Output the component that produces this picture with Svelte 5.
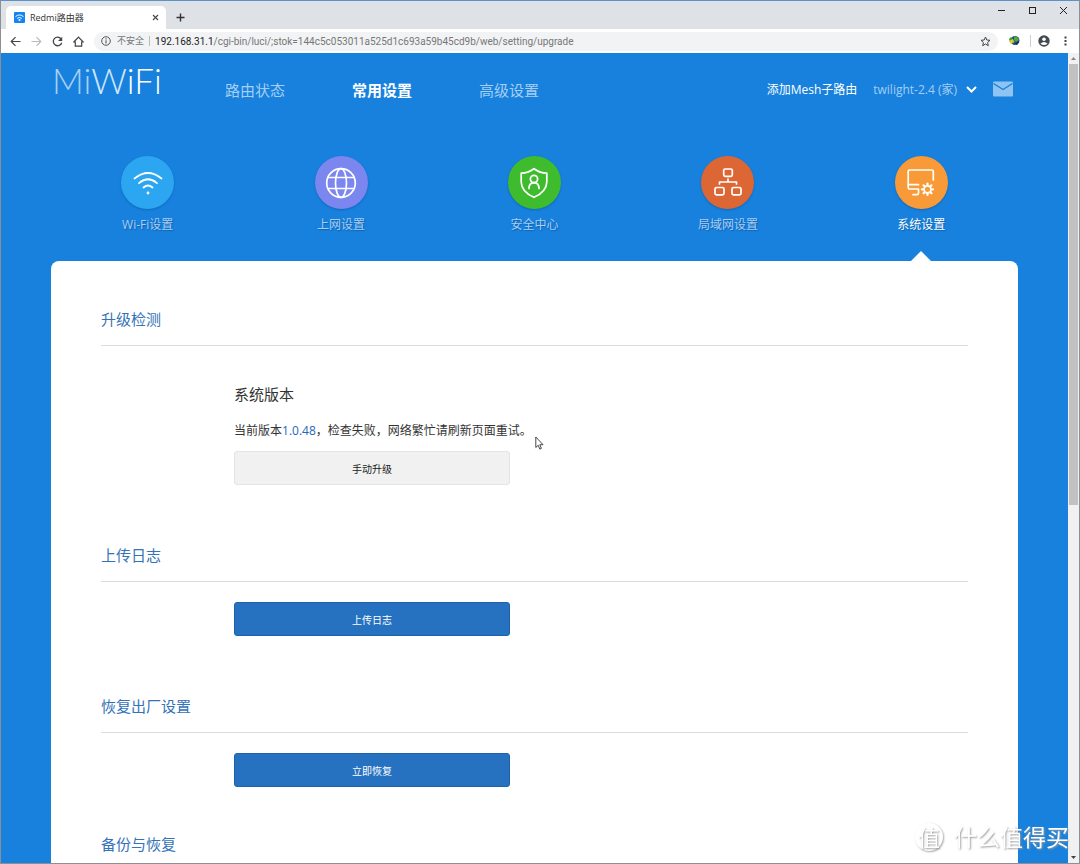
<script>
  const address = '/cgi-bin/luci/;stok=144c5c053011a525d1c693a59b45cd9b/web/setting/upgrade';
  const nav = ['路由状态', '常用设置', '高级设置'];
  const items = [
    { id: 'wifi', label: 'Wi-Fi设置' },
    { id: 'globe', label: '上网设置' },
    { id: 'shield', label: '安全中心' },
    { id: 'lan', label: '局域网设置' },
    { id: 'system', label: '系统设置' }
  ];
  const teeth = [0, 45, 90, 135, 180, 225, 270, 315];
  let activeNav = $state(1);
  let activeItem = $state('system');
</script>

<div class="window">
  <div class="tabs">
    <div class="tab">
      <svg class="fav" viewBox="0 0 11 11"><rect width="11" height="11" rx="1" fill="#1585f5"/><path d="M1.5 4.6Q5.500 1.300 9.500 4.600M3.200 6.400Q5.500 4.600 7.800 6.400" fill="none" stroke="#fff"/><circle cx="5.500" cy="8" r="1" fill="#fff"/></svg>
      <span class="tab-name">Redmi路由器</span>
      <button class="plain close" aria-label="关闭标签页"><svg width="7" height="7" viewBox="0 0 7 7"><path d="M1 1l5 5M6 1L1 6" stroke="#444" stroke-width="1.100"/></svg></button>
    </div>
    <button class="plain add" aria-label="新标签页"><svg width="9" height="9" viewBox="0 0 9 9"><path d="M4.500 .5v8M.5 4.500h8" stroke="#333" stroke-width="1.400"/></svg></button>
    <div class="win-buttons">
      <button class="plain" aria-label="最小化"><svg width="9" height="9" viewBox="0 0 9 9"><path d="M1 4.500h7" stroke="#222"/></svg></button>
      <button class="plain" aria-label="最大化"><svg width="9" height="9" viewBox="0 0 9 9"><rect x="1.500" y="1.500" width="6" height="6" fill="none" stroke="#222"/></svg></button>
      <button class="plain" aria-label="关闭"><svg width="9" height="9" viewBox="0 0 9 9"><path d="M1 1l7 7M8 1L1 8" stroke="#222"/></svg></button>
    </div>
  </div>

  <div class="toolbar">
    <button class="plain" aria-label="后退"><svg width="11" height="11" viewBox="0 0 11 11"><path d="M10.500 5.500H1.500M5.500 1.200L1.200 5.500l4.300 4.300" fill="none" stroke="#444" stroke-width="1.200"/></svg></button>
    <button class="plain" aria-label="前进"><svg width="11" height="11" viewBox="0 0 11 11"><path d="M.5 5.500h9M5.500 1.200l4.300 4.300-4.300 4.300" fill="none" stroke="#bbb" stroke-width="1.200"/></svg></button>
    <button class="plain" aria-label="刷新"><svg width="11" height="11" viewBox="0 0 11 11"><path d="M9 2.800A4.300 4.300 0 1 0 9.700 6.700" fill="none" stroke="#444" stroke-width="1.300"/><path d="M10.200 .8v4.200H6z" fill="#444"/></svg></button>
    <button class="plain" aria-label="主页"><svg width="11" height="11" viewBox="0 0 11 11"><path d="M.8 6L5.500 1.200 10.200 6H8.700v4.200H2.300V6z" fill="none" stroke="#444" stroke-width="1.200"/></svg></button>
    <div class="omnibox">
      <svg width="10" height="10" viewBox="0 0 10 10"><circle cx="5" cy="5" r="4.300" fill="none" stroke="#555"/><path d="M5 4.300v3.200M5 2.300v1.200" stroke="#555" stroke-width="1.100"/></svg>
      <span class="insecure">不安全</span>
      <span class="url"><b>192.168.31.1</b>{address}</span>
      <button class="plain star" aria-label="收藏"><svg width="11" height="11" viewBox="0 0 11 11"><path d="M5.500 1l1.300 3 3.200.3-2.400 2.200.7 3.200-2.800-1.700-2.800 1.700.7-3.200L1 4.300 4.200 4z" fill="none" stroke="#444"/></svg></button>
    </div>
    <button class="plain ext" aria-label="扩展程序"><svg width="12" height="12" viewBox="0 0 12 12"><circle cx="7" cy="5.500" r="4.500" fill="#1d4f93"/><path d="M6 1.500Q10 1 11 5L8 7 6 5z" fill="#58a33a"/><path d="M3 2l4 5-2 1-3-1-1-3z" fill="#35a526"/><path d="M1 6l4-2 1 3-3 2z" fill="#e8c63a"/><path d="M7 9l3-3 1 1-2 3z" fill="#183247"/></svg></button>
    <button class="plain account" aria-label="用户"><svg width="12" height="12" viewBox="0 0 12 12"><circle cx="6" cy="6" r="5.700" fill="#444a50"/><circle cx="6" cy="4.200" r="1.800" fill="#fff"/><path d="M2.400 8.700Q6 5.500 9.600 8.700 6 11.500 2.400 8.700" fill="#fff"/></svg></button>
    <button class="plain more" aria-label="菜单"><svg width="3" height="10" viewBox="0 0 3 10"><path d="M.5 .5h2v2h-2zM.5 4h2v2h-2zM.5 7.500h2v2h-2z" fill="#444"/></svg></button>
  </div>

  <div class="viewport">
    <div class="page">
      <header>
        <a class="logo" href="#home" aria-label="MiWiFi"><span class="dim">Mi</span><span class="mid">W</span>iFi</a>
        <nav class="main-nav">
          {#each nav as name, i}
            <a href="#nav" class:active={activeNav === i} onclick={() => (activeNav = i)}>{name}</a>
          {/each}
        </nav>
        <div class="account-bar">
          <a class="mesh" href="#mesh">添加Mesh子路由</a>
          <button class="plain router">twilight-2.4 (家)<svg width="11" height="7" viewBox="0 0 11 7"><path d="M1 1l4.500 4.500L10 1" fill="none" stroke="#fff" stroke-width="2"/></svg></button>
          <a class="mail" href="#mail" aria-label="消息"><svg width="20" height="16" viewBox="0 0 20 16"><rect y=".5" width="20" height="15" rx="1" fill="#8fc3f1"/><path d="M.5 2.500L10 8.500l9.500-6" fill="none" stroke="#1781dd" stroke-width="1.400"/></svg></a>
        </div>
      </header>

      <nav class="features">
        {#each items as item}
          <a href="#settings" class:active={activeItem === item.id} onclick={() => (activeItem = item.id)}>
            <span class="disc {item.id}">
              <svg width="32" height="32" viewBox="0 0 32 32" fill="none" stroke="#fff" stroke-width="1.700" stroke-linecap="round" stroke-linejoin="round">
                {#if item.id === 'wifi'}
                  <path d="M2.500 11.500Q16 .5 29.500 11.500M7 16.200Q16 8.300 25 16.200M11.500 20.500Q16 16.500 20.500 20.500"/><circle cx="16" cy="26" r="1.400" fill="#fff" stroke="none"/>
                {:else if item.id === 'globe'}
                  <circle cx="16" cy="16" r="14.300"/><ellipse cx="16" cy="16" rx="5.500" ry="14.300"/><path d="M3.500 10.500h25M3.500 21.500h25"/>
                {:else if item.id === 'shield'}
                  <path d="M16 1.700Q10 6 3.200 6.200V15Q3.500 25 16 30.300 28.500 25 28.800 15V6.200Q22 6 16 1.700z"/><circle cx="16" cy="12" r="3.600"/><path d="M11 21.500Q11 15.800 16 15.600 21 15.800 21 21.500"/>
                {:else if item.id === 'lan'}
                  <rect x="11.700" y="2" width="8.600" height="7.300" rx="1.500"/><rect x="3" y="20.500" width="9" height="7.300" rx="1.500"/><rect x="20" y="20.500" width="9" height="7.300" rx="1.500"/><path d="M16 12v3M7.500 17v-2h17v2"/>
                {:else}
                  <path d="M28.300 13V4.500Q28.300 3 26.800 3H4.700Q3.200 3 3.200 4.500V16Q3.200 17.700 4.700 17.700H13.500M3.200 16V20.500Q3.200 22 4.700 22H13.500V26Q13.500 27.700 12 27.700H8"/><circle cx="22.500" cy="22.300" r="3.500"/>
                  {#each teeth as angle}
                    <path d="M22.500 18v-1.300" transform="rotate({angle} 22.500 22.300)" stroke-width="2.200"/>
                  {/each}
                {/if}
              </svg>
            </span>
            <span class="label">{item.label}</span>
          </a>
        {/each}
      </nav>

      <main>
        <section>
          <h2>升级检测</h2>
          <div class="body version">
            <h3>系统版本</h3>
            <p>当前版本<span class="number">1.0.48</span>，检查失败，网络繁忙请刷新页面重试。</p>
            <button class="action light">手动升级</button>
          </div>
        </section>
        <section>
          <h2>上传日志</h2>
          <div class="body"><button class="action">上传日志</button></div>
        </section>
        <section class="reset">
          <h2>恢复出厂设置</h2>
          <div class="body"><button class="action">立即恢复</button></div>
        </section>
        <section>
          <h2>备份与恢复</h2>
        </section>
      </main>
    </div>
    <div class="scrollbar" aria-hidden="true">
      <svg width="11" height="11" viewBox="0 0 11 11"><path d="M3 7l2.500-3L8 7z" fill="#888"/></svg>
      <div class="track"><div class="thumb"></div></div>
      <svg width="11" height="11" viewBox="0 0 11 11"><path d="M3 4l2.500 3L8 4z" fill="#444"/></svg>
    </div>
  </div>

  <svg class="cursor" width="9" height="14" viewBox="0 0 9 14"><path d="M.8 1v10.500l2.400-2.200 1.600 3.800 1.600-.7-1.600-3.700h3.200z" fill="#fff" stroke="#333" stroke-width=".9"/></svg>
  <div class="watermark"><span class="seal">值</span><span>什么值得买</span></div>
</div>

<style>
  :global(body) { margin: 0; }
  .window {
    position: relative;
    box-sizing: border-box;
    height: 100vh;
    display: flex;
    flex-direction: column;
    border: 1px solid #8b9096;
    border-top-color: #5b93c9;
    overflow: hidden;
    font-family: "Open Sans", "Noto Sans CJK SC", sans-serif;
    font-size: 12px;
  }
  a { color: inherit; text-decoration: none; }
  h2, h3, p { margin: 0; font-weight: 400; }
  svg { display: block; flex: none; }
  .plain {
    display: flex;
    align-items: center;
    justify-content: center;
    padding: 0;
    border: 0;
    background: none;
    font: inherit;
    color: inherit;
  }
  .tabs { display: flex; height: 28px; flex: none; background: #dee1e6; }
  .tab {
    display: flex;
    align-items: center;
    box-sizing: border-box;
    width: 160px;
    margin: 5px 0 0 5px;
    padding: 0 7px 0 8px;
    border-radius: 5px 5px 0 0;
    background: #fff;
    font-size: 9px;
    color: #333;
  }
  .fav { width: 11px; height: 11px; margin-right: 5px; }
  .tab-name { flex: 1; }
  .add { width: 28px; margin-top: 4px; }
  .win-buttons { display: flex; margin-left: auto; }
  .win-buttons button { width: 31px; height: 18px; }
  .toolbar {
    display: flex;
    align-items: center;
    flex: none;
    height: 24px;
    padding: 0 12px 0 9px;
    gap: 10px;
    background: #fff;
  }
  .omnibox {
    display: flex;
    align-items: center;
    flex: 1;
    height: 19px;
    padding: 0 7px;
    border-radius: 10px;
    background: #f1f3f4;
    font-size: 10px;
    color: #777;
  }
  .insecure { margin-left: 6px; padding-right: 5px; border-right: 1px solid #bbb; line-height: 10px; font-size: 9px; }
  .url { margin-left: 5px; font-family: Roboto, sans-serif; }
  .url b { font-weight: 400; color: #222; }
  .star { margin-left: auto; }
  .account { padding: 0 4px 0 7px; border-left: 1px solid #ccc; }
  .viewport { display: flex; flex: 1; min-height: 0; }
  .page {
    box-sizing: border-box;
    flex: 1;
    padding: 0 50px;
    overflow-y: auto;
    scrollbar-width: none;
    background: #1781dd;
    color: #a5cef4;
  }
  header { display: flex; align-items: center; height: 72px; }
  .logo {
    width: 140px;
    margin: -18px 0 0 1px;
    font-family: Lato, sans-serif;
    font-weight: 300;
    font-size: 35px;
    line-height: 40px;
    color: #fff;
  }
  .dim { color: #a8d0f4; }
  .mid { color: #cfe5fa; }
  .main-nav { display: flex; gap: 67px; margin-left: 33px; font-size: 15px; }
  .main-nav .active { color: #fff; font-weight: 700; }
  .account-bar { display: flex; align-items: center; gap: 16px; margin-left: auto; padding-right: 5px; }
  .mesh { color: #fff; }
  .router { gap: 9px; }
  .features { display: grid; grid-template-columns: repeat(5, 1fr); height: 136px; }
  .features a {
    position: relative;
    display: flex;
    flex-direction: column;
    align-items: center;
    padding-top: 31px;
    text-shadow: 1px 1px 1px #1060ae;
  }
  .features .active { color: #fff; }
  .features .active::after {
    content: "";
    position: absolute;
    bottom: 0;
    border: solid transparent;
    border-width: 0 10px 10px;
    border-bottom-color: #fff;
  }
  .disc {
    display: grid;
    place-items: center;
    width: 53px;
    height: 53px;
    border-radius: 50%;
    box-shadow: 0 1px 2px #1068bb;
  }
  .wifi { background: #2ca6f0; }
  .globe { background: #7b86ef; }
  .shield { background: #3fbc2d; }
  .lan { background: #dc6735; }
  .system { background: #f99a38; }
  .label { margin-top: 7px; line-height: 18px; }
  main { padding: 46px 50px; border-radius: 8px; background: #fff; color: #333; }
  section { padding-bottom: 58px; }
  .reset { padding-bottom: 45px; }
  h2 { padding-bottom: 14px; border-bottom: 1px solid #dcdcdc; font-size: 15px; line-height: 24px; color: #3473b7; }
  .body { padding: 20px 0 0 133px; }
  .version { padding-top: 36px; }
  h3 { font-size: 15px; line-height: 24px; }
  p { margin: 14px 0 10px; line-height: 21px; }
  .number { color: #2467bd; }
  .action {
    display: block;
    width: 276px;
    height: 34px;
    padding: 0;
    border: 1px solid #1d62ab;
    border-radius: 3px;
    background: #2672c0;
    color: #fff;
    font: 10px "Open Sans", "Noto Sans CJK SC", sans-serif;
  }
  .light { border-color: #e4e4e4; background: #f1f1f1; color: #222; }
  .scrollbar { display: flex; flex-direction: column; width: 11px; background: #f1f1f1; }
  .track { flex: 1; }
  .thumb { width: 9px; height: 56%; margin: 0 auto; background: #c1c1c1; }
  .cursor { position: absolute; left: 534px; top: 435px; }
  .watermark {
    position: absolute;
    right: 10px;
    bottom: 10px;
    display: flex;
    align-items: center;
    gap: 11px;
    color: #fff;
    font-size: 23px;
    line-height: 32px;
    text-shadow: 1px 1px 2px #999;
    pointer-events: none;
  }
  .seal {
    width: 28px;
    border-radius: 50%;
    box-shadow: 1px 1px 2px #aaa;
    font-size: 22px;
    line-height: 28px;
    text-align: center;
  }
</style>
